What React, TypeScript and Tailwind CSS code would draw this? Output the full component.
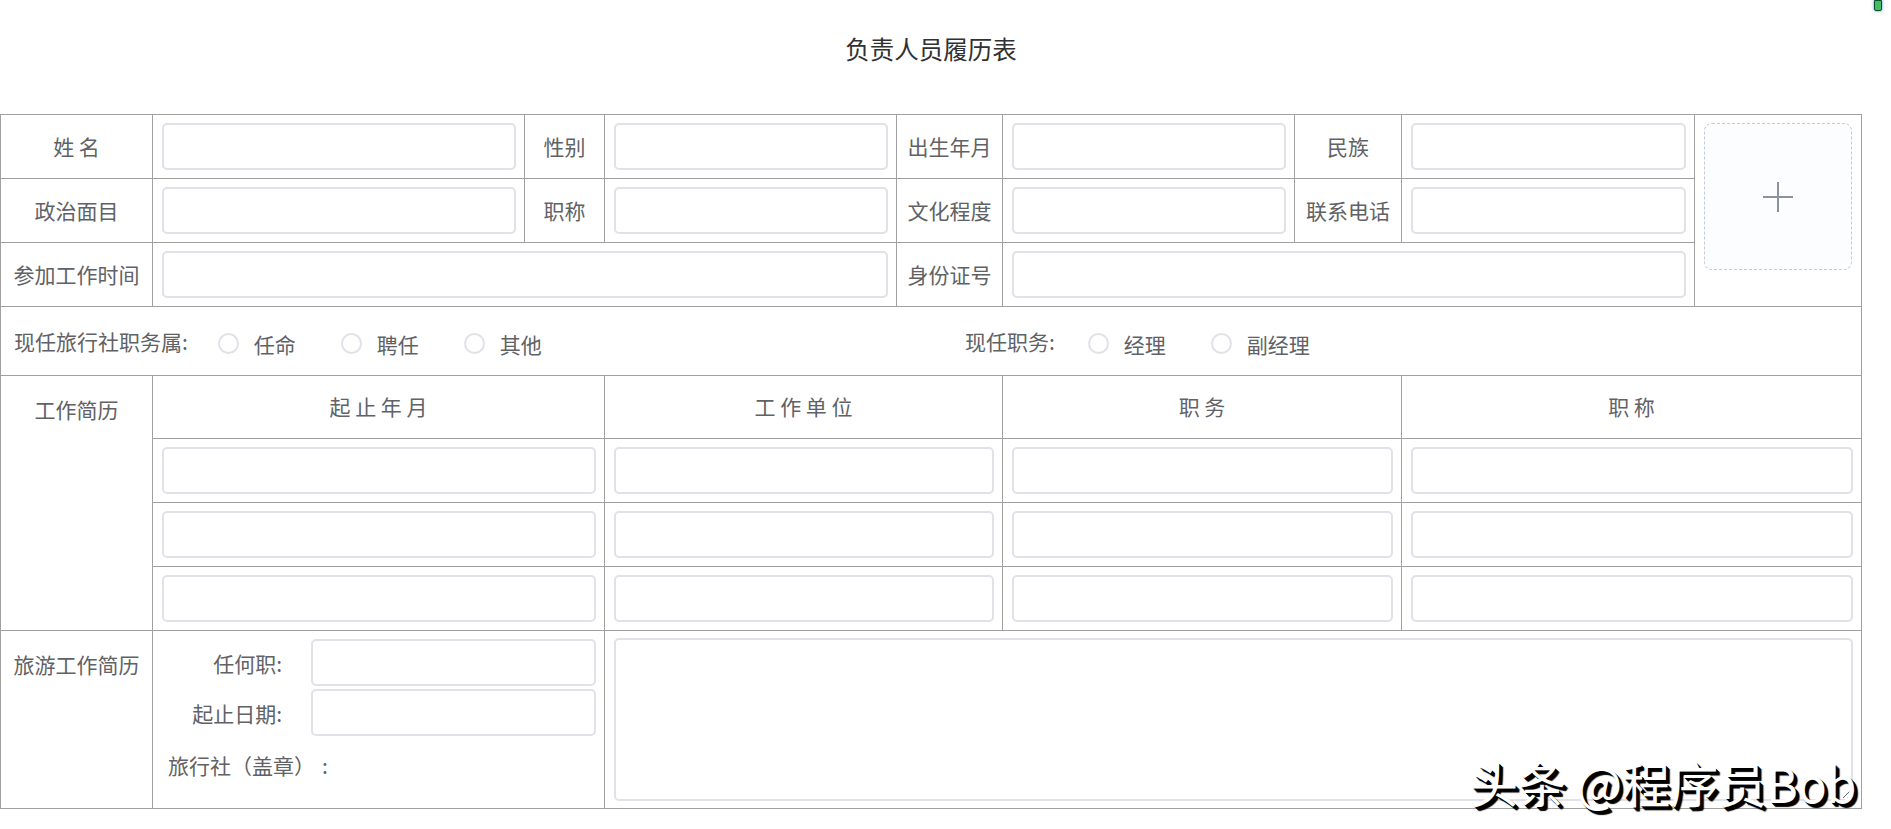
import React from "react";

// 负责人员履历表 — bordered form grid

const LINE = "border-r border-b border-[#a0a0a0]";
const LABEL = `${LINE} flex items-center justify-center text-[21px] text-[#606266]`;
const FIELD = `${LINE} flex items-center pl-[9px] pr-[8px]`;

function Input() {
  return (
    <input
      type="text"
      className="h-[47px] w-full rounded-[5px] border-2 border-[#e0e2e7] bg-white px-3 text-[18px] text-[#606266] outline-none"
    />
  );
}

function Radio({ label }: { label: string }) {
  return (
    <label className="mr-[45px] mt-[5px] flex items-center">
      <span className="h-[21px] w-[21px] rounded-full border-2 border-[#e0e2e7] bg-white" />
      <span className="ml-[15px] text-[21px] leading-[28px] text-[#606266]">{label}</span>
    </label>
  );
}

const BASIC_ROWS = [
  ["姓 名", "性别", "出生年月", "民族"],
  ["政治面目", "职称", "文化程度", "联系电话"],
];

const HEADERS = ["起 止 年 月", "工 作 单 位", "职 务", "职 称"];

export default function App() {
  return (
    <div className="relative min-h-[829px] bg-white font-['Noto_Sans_CJK_SC','Microsoft_YaHei',sans-serif]">
      <div className="w-[1862px]">
        {/* title */}
        <div className="h-[114px] pt-[33px] text-center text-[24.5px] leading-[32px] text-[#303133]">
          负责人员履历表
        </div>

        <div className="grid grid-cols-[152px_372px_80px_292px_106px_292px_107px_293px_167px] grid-rows-[64px_64px_64px_69px_63px_64px_64px_64px_178px] border-l border-t border-[#a0a0a0]">
          {/* row 1 */}
          {BASIC_ROWS[0].map((label) => (
            <React.Fragment key={label}>
              <div className={LABEL}>{label}</div>
              <div className={FIELD}>
                <Input />
              </div>
            </React.Fragment>
          ))}
          {/* photo upload */}
          <div className={`${LINE} row-span-3 pl-[9px] pt-[8px]`}>
            <div className="flex h-[147px] w-[148px] items-center justify-center rounded-[8px] border-[1.5px] border-dashed border-[#c0ccda] bg-[#fbfdff]">
              <svg width="32" height="32" viewBox="0 0 32 32">
                <path d="M16 1v30M1 16h30" stroke="#8c939d" strokeWidth="2" fill="none" />
              </svg>
            </div>
          </div>

          {/* row 2 */}
          {BASIC_ROWS[1].map((label) => (
            <React.Fragment key={label}>
              <div className={LABEL}>{label}</div>
              <div className={FIELD}>
                <Input />
              </div>
            </React.Fragment>
          ))}

          {/* row 3 */}
          <div className={LABEL}>参加工作时间</div>
          <div className={`${FIELD} col-span-3`}>
            <Input />
          </div>
          <div className={LABEL}>身份证号</div>
          <div className={`${FIELD} col-span-3`}>
            <Input />
          </div>

          {/* row 4: radios */}
          <div className={`${LINE} col-span-9 flex items-center pl-[13px] text-[21px] text-[#606266]`}>
            <div className="flex w-[951px] items-center">
              <span className="mr-[30px] leading-[28px]">现任旅行社职务属:</span>
              <Radio label="任命" />
              <Radio label="聘任" />
              <Radio label="其他" />
            </div>
            <div className="flex items-center">
              <span className="mr-[33px] leading-[28px]">现任职务:</span>
              <Radio label="经理" />
              <Radio label="副经理" />
            </div>
          </div>

          {/* work history */}
          <div className={`${LINE} row-span-4 pt-[19px] text-center text-[21px] leading-[28px] text-[#606266]`}>
            工作简历
          </div>
          {HEADERS.map((h) => (
            <div key={h} className={`${LABEL} col-span-2`}>
              {h}
            </div>
          ))}
          {[0, 1, 2].map((r) =>
            HEADERS.map((h) => (
              <div key={`${r}-${h}`} className={`${FIELD} col-span-2`}>
                <Input />
              </div>
            ))
          )}

          {/* travel work history */}
          <div className={`${LINE} pt-[19px] text-center text-[21px] leading-[28px] text-[#606266]`}>
            旅游工作简历
          </div>
          <div className={`${LINE} col-span-2 flex flex-col pl-[9px] pr-[8px] pt-[8px] text-[21px] text-[#606266]`}>
            <div className="flex items-center">
              <span className="w-[120px] text-right leading-[28px]">任何职:</span>
              <div className="ml-[29px] flex-1">
                <Input />
              </div>
            </div>
            <div className="mt-[3px] flex items-center">
              <span className="w-[120px] text-right leading-[28px]">起止日期:</span>
              <div className="ml-[29px] flex-1">
                <Input />
              </div>
            </div>
            <div className="mt-[15px] pl-[6px] leading-[28px]">
              旅行社（盖章）<span className="ml-[7px]">:</span>
            </div>
          </div>
          <div className={`${LINE} col-span-6 pl-[9px] pr-[8px] pt-[7px] pb-[7px]`}>
            <textarea className="h-full w-full rounded-[5px] border-2 border-[#e0e2e7] bg-white p-3 text-[18px] outline-none" />
          </div>
        </div>
      </div>

      {/* watermark */}
      <div className="absolute left-[1470px] top-[758px] whitespace-nowrap text-[48px] leading-none text-white [text-shadow:1px_1px_0_#000,2px_2px_0_#000,3px_3px_0_#000,4px_4px_1px_#000]">
        头条 @程序员Bob
      </div>

      {/* extension badge */}
      <div className="absolute left-[1874px] top-0 h-[11px] w-[8px] rounded-b-[2px] border border-[#0b4f2a] bg-[#3fbf5f] shadow-[0_0_3px_#4a7cff]" />
    </div>
  );
}
